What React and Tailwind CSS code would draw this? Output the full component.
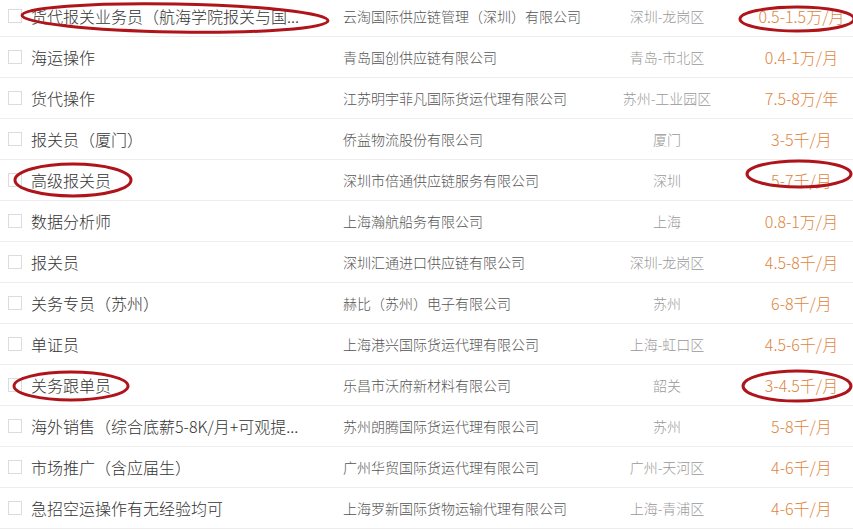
import React from "react";

const rows = [
  ["货代报关业务员（航海学院报关与国...", "云淘国际供应链管理（深圳）有限公司", "深圳-龙岗区", "0.5-1.5万/月"],
  ["海运操作", "青岛国创供应链有限公司", "青岛-市北区", "0.4-1万/月"],
  ["货代操作", "江苏明宇菲凡国际货运代理有限公司", "苏州-工业园区", "7.5-8万/年"],
  ["报关员（厦门）", "侨益物流股份有限公司", "厦门", "3-5千/月"],
  ["高级报关员", "深圳市倍通供应链服务有限公司", "深圳", "5-7千/月"],
  ["数据分析师", "上海瀚航船务有限公司", "上海", "0.8-1万/月"],
  ["报关员", "深圳汇通进口供应链有限公司", "深圳-龙岗区", "4.5-8千/月"],
  ["关务专员（苏州）", "赫比（苏州）电子有限公司", "苏州", "6-8千/月"],
  ["单证员", "上海港兴国际货运代理有限公司", "上海-虹口区", "4.5-6千/月"],
  ["关务跟单员", "乐昌市沃府新材料有限公司", "韶关", "3-4.5千/月"],
  ["海外销售（综合底薪5-8K/月+可观提...", "苏州朗腾国际货运代理有限公司", "苏州", "5-8千/月"],
  ["市场推广（含应届生）", "广州华贸国际货运代理有限公司", "广州-天河区", "4-6千/月"],
  ["急招空运操作有无经验均可", "上海罗新国际货物运输代理有限公司", "上海-青浦区", "4-6千/月"],
];

const ellipses = [
  { cx: 175, cy: 18, rx: 153, ry: 14, rot: 1 },
  { cx: 797, cy: 19, rx: 57, ry: 12, rot: 0 },
  { cx: 73, cy: 180, rx: 58, ry: 16, rot: 0 },
  { cx: 799, cy: 174, rx: 52, ry: 13, rot: 0 },
  { cx: 71, cy: 386, rx: 57, ry: 14, rot: 0 },
  { cx: 797, cy: 386, rx: 54, ry: 15, rot: 0 },
];

export default function App() {
  return (
    <div
      className="relative w-[853px] h-[531px] overflow-hidden bg-white"
      style={{ fontFamily: '"Noto Sans CJK SC", "Noto Sans", sans-serif' }}
    >
      <div className="-mt-[4px] flex flex-col">
        {rows.map((r, i) => (
          <div
            key={i}
            className="flex h-[41px] items-center border-b border-[#ededed]"
          >
            <div className="flex w-[343px] items-center pl-[8px]">
              <span className="h-[14px] w-[14px] shrink-0 border border-[#dcdcdc] bg-white" />
              <span className="ml-[9px] whitespace-nowrap text-[16px] leading-none font-light text-[#333]">
                {r[0]}
              </span>
            </div>
            <div className="w-[257px] whitespace-nowrap text-[14px] leading-none font-light text-[#555]">
              {r[1]}
            </div>
            <div className="w-[134px] whitespace-nowrap text-center text-[14px] leading-none font-light text-[#999]">
              {r[2]}
            </div>
            <div className="ml-[16px] w-[103px] whitespace-nowrap text-center text-[16px] leading-none font-light text-[#e0853e]">
              {r[3]}
            </div>
          </div>
        ))}
      </div>
      <svg
        className="pointer-events-none absolute left-0 top-0"
        width="853"
        height="531"
        viewBox="0 0 853 531"
      >
        {ellipses.map((e, i) => (
          <ellipse
            key={i}
            cx={e.cx}
            cy={e.cy}
            rx={e.rx}
            ry={e.ry}
            transform={`rotate(${e.rot} ${e.cx} ${e.cy})`}
            fill="none"
            stroke="#ae141a"
            strokeWidth="3"
          />
        ))}
      </svg>
    </div>
  );
}
